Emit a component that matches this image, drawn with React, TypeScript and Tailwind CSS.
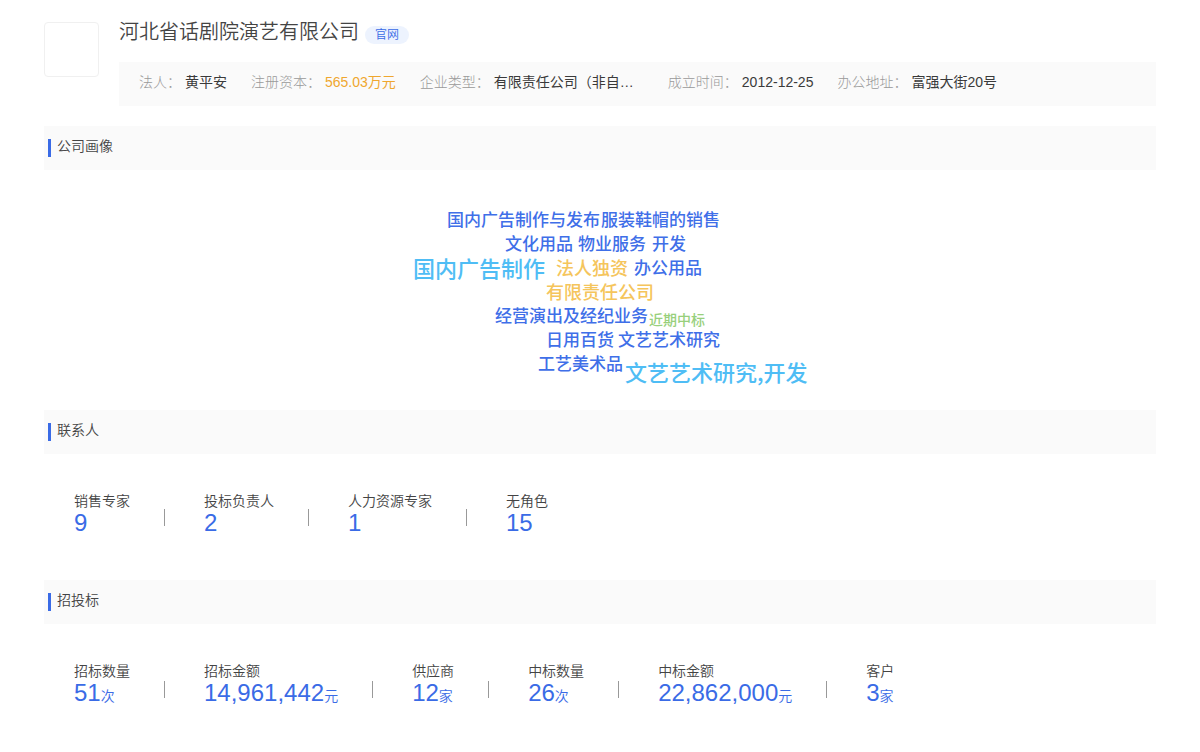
type InfoItem = {
  label: string;
  value: string;
  valueClass?: string;
};

type Stat = {
  label: string;
  value: string;
  unit?: string;
};

const info: InfoItem[] = [
  { label: "法人：", value: "黄平安" },
  { label: "注册资本：", value: "565.03万元", valueClass: "text-[#efa72f]" },
  { label: "企业类型：", value: "有限责任公司（非自…", valueClass: "w-[150px] text-[#3a3a3a]" },
  { label: "成立时间：", value: "2012-12-25" },
  { label: "办公地址：", value: "富强大街20号" },
];

const contacts: Stat[] = [
  { label: "销售专家", value: "9" },
  { label: "投标负责人", value: "2" },
  { label: "人力资源专家", value: "1" },
  { label: "无角色", value: "15" },
];

const bids: Stat[] = [
  { label: "招标数量", value: "51", unit: "次" },
  { label: "招标金额", value: "14,961,442", unit: "元" },
  { label: "供应商", value: "12", unit: "家" },
  { label: "中标数量", value: "26", unit: "次" },
  { label: "中标金额", value: "22,862,000", unit: "元" },
  { label: "客户", value: "3", unit: "家" },
];

const blue = "text-[17px] text-[#3f6fe8]";
const sky = "text-[22px] text-[#4fbdf5]";
const gold = "text-[18px] text-[#f5c55c]";
const green = "text-sm text-[#98d07c]";

// word cloud: every word has its own spot on the canvas
const words = [
  { text: "国内广告制作与发布", className: `left-[47px] top-[37px] ${blue}` },
  { text: "服装鞋帽的销售", className: `left-[201px] top-[37px] ${blue}` },
  { text: "文化用品", className: `left-[105px] top-[61px] ${blue}` },
  { text: "物业服务", className: `left-[178px] top-[61px] ${blue}` },
  { text: "开发", className: `left-[252px] top-[61px] ${blue}` },
  { text: "国内广告制作", className: `left-[13px] top-[85px] ${sky}` },
  { text: "法人独资", className: `left-[156px] top-[85px] ${gold}` },
  { text: "办公用品", className: `left-[234px] top-[85px] ${blue}` },
  { text: "有限责任公司", className: `left-[146px] top-[109px] ${gold}` },
  { text: "经营演出及经纪业务", className: `left-[95px] top-[133px] ${blue}` },
  { text: "近期中标", className: `left-[249px] top-[137px] ${green}` },
  { text: "日用百货", className: `left-[146px] top-[157px] ${blue}` },
  { text: "文艺艺术研究", className: `left-[218px] top-[157px] ${blue}` },
  { text: "工艺美术品", className: `left-[138px] top-[181px] ${blue}` },
  { text: "文艺艺术研究,开发", className: `left-[225px] top-[189px] ${sky}` },
];

function SectionTitle({ title }: { title: string }) {
  return (
    <div className="flex h-11 items-center gap-1.5 bg-[#fafafa] px-1">
      <span className="h-[18px] w-[3px] bg-[#3a6be6]" />
      <h2 className="pb-1 text-sm font-[350] text-[#444]">{title}</h2>
    </div>
  );
}

function StatRow({ stats }: { stats: Stat[] }) {
  return (
    <dl className="flex px-[30px] pt-[37px] pb-[45px]">
      {stats.map((s, i) => (
        <div key={s.label} className="flex items-center">
          {i > 0 && <span className="mr-[39px] ml-[34px] mt-[9px] h-[17px] w-px bg-[#999]" />}
          <div>
            <dt className="text-sm font-[350] text-[#444]">{s.label}</dt>
            <dd className="text-2xl leading-6 font-[350] text-[#3a6be6]">
              {s.value}
              {s.unit && <span className="text-sm leading-6">{s.unit}</span>}
            </dd>
          </div>
        </div>
      ))}
    </dl>
  );
}

export default function App() {
  return (
    <main className="bg-white px-11 pt-[22px] font-['Liberation_Sans','Noto_Sans_CJK_SC',sans-serif]">
      <header className="mb-5 flex gap-5">
        <div className="size-[55px] shrink-0 rounded border border-[#f0f0f0]" />
        <div className="min-w-0 flex-1">
          <div className="mb-5 flex h-5 items-center gap-1.5">
            <h1 className="text-xl font-[350] text-[#444]">河北省话剧院演艺有限公司</h1>
            <a href="#" className="mt-1.5 rounded-full bg-[#edf3fe] px-2.5 text-xs leading-[18px] font-[350] text-[#3a6be6]">官网</a>
          </div>
          <dl className="flex flex-wrap gap-x-6 bg-[#fafafa] px-5 pt-2.5 pb-[14px] text-sm">
            {info.map((item) => (
              <div key={item.label} className="flex gap-1">
                <dt className="font-light text-[#999]">{item.label}</dt>
                <dd className={item.valueClass || "text-[#3a3a3a]"}>{item.value}</dd>
              </div>
            ))}
          </dl>
        </div>
      </header>

      <section>
        <SectionTitle title="公司画像" />
        <div className="relative mx-auto h-60 w-[400px] font-['Noto_Sans_CJK_SC',sans-serif]">
          {words.map((w) => (
            <span key={w.text} className={`absolute leading-6 font-medium whitespace-nowrap ${w.className}`}>{w.text}</span>
          ))}
        </div>
      </section>

      <section>
        <SectionTitle title="联系人" />
        <StatRow stats={contacts} />
      </section>

      <section>
        <SectionTitle title="招投标" />
        <StatRow stats={bids} />
      </section>
    </main>
  );
}
